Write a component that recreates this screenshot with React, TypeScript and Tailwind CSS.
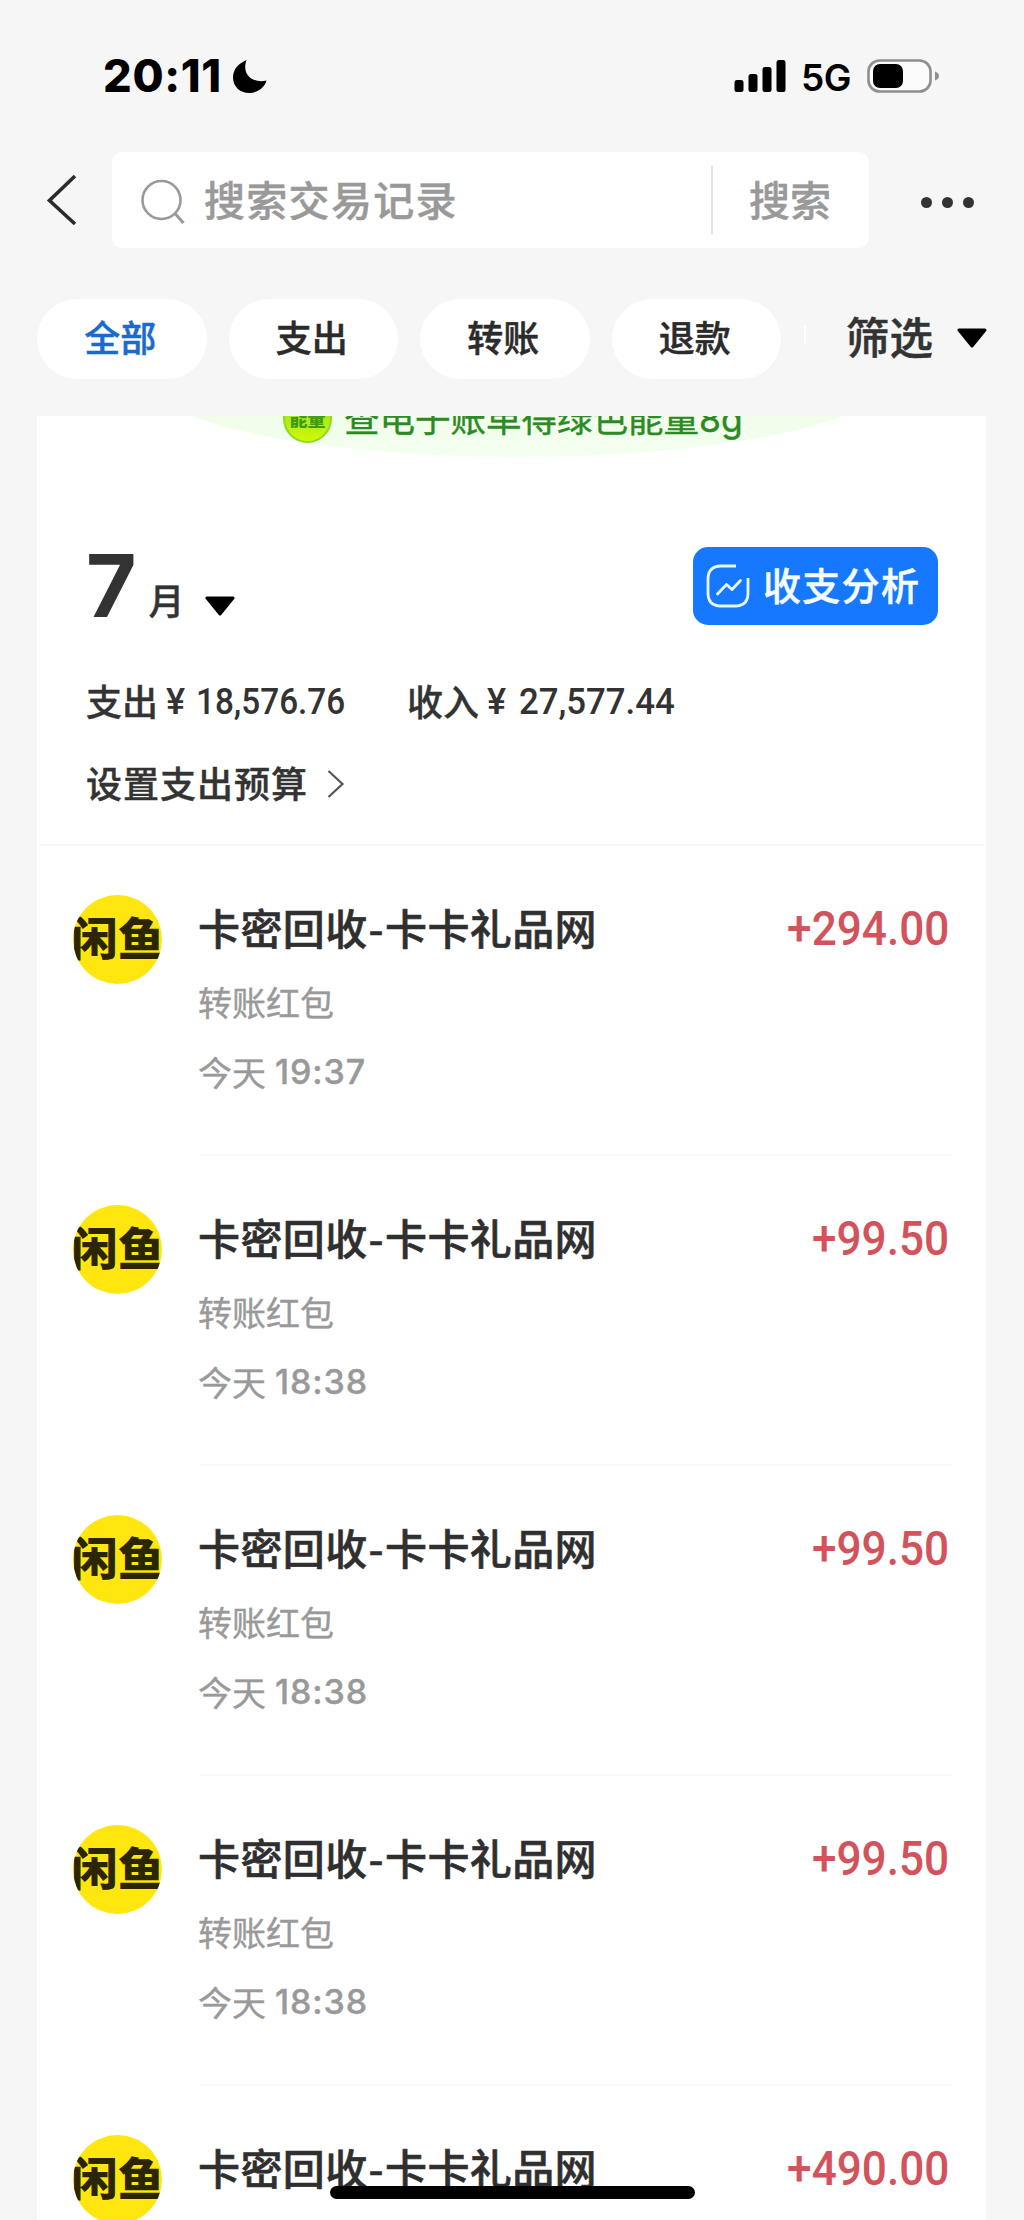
import clsx from "clsx";

type Transaction = {
  id: number;
  title: string[];
  kind: string;
  time: string;
  amount: string;
};

const transactions: Transaction[] = [
  { id: 1, title: ["卡密回收", "卡卡礼品网"], kind: "转账红包", time: "19:37", amount: "+294.00" },
  { id: 2, title: ["卡密回收", "卡卡礼品网"], kind: "转账红包", time: "18:38", amount: "+99.50" },
  { id: 3, title: ["卡密回收", "卡卡礼品网"], kind: "转账红包", time: "18:38", amount: "+99.50" },
  { id: 4, title: ["卡密回收", "卡卡礼品网"], kind: "转账红包", time: "18:38", amount: "+99.50" },
  { id: 5, title: ["卡密回收", "卡卡礼品网"], kind: "转账红包", time: "18:38", amount: "+490.00" },
];

const filters = ["全部", "支出", "转账", "退款"];

// small rounded triangle used next to dropdown labels
const Caret = ({ className }: { className?: string }) => (
  <svg className={clsx("h-5 w-[30px] shrink-0", className)} viewBox="0 0 30 20">
    <path d="M2 2h26L15 18z" fill="#000" stroke="#000" strokeWidth="3" strokeLinejoin="round" />
  </svg>
);

const StatusBar = () => (
  <div className="flex h-[152px] items-start pl-[103px] pr-[84px] pt-[54px]">
    <span className="w-[119px] whitespace-nowrap font-['Inter'] text-[45px] leading-[44px] font-extrabold tracking-[0.700px] text-black">
      20:11
    </span>
    <svg className="mt-[5px] ml-[10px] h-[35px] w-[36px]" viewBox="0 0 36 35">
      <path d="M14.500 1C8 4 1 9 1 18.500C1 27.500 8 34 17 34C26 34 33 28 34.500 21.500C22 24.500 9 17 14.500 1Z" fill="#000" />
    </svg>
    <svg className="mt-[5px] ml-auto h-[34px] w-[52px]" viewBox="0 0 52 34">
      <rect x="0.5" y="21" width="9" height="12" rx="2.500" />
      <rect x="14.500" y="15" width="9" height="18" rx="2.500" />
      <rect x="28.500" y="8" width="9" height="25" rx="2.500" />
      <rect x="42.500" y="1" width="9" height="32" rx="2.500" />
    </svg>
    <span className="mt-[5px] ml-[15px] w-[50px] whitespace-nowrap font-['Inter'] text-[37px] leading-[37px] font-semibold tracking-[-0.5px] text-black">
      5G
    </span>
    <svg className="mt-[5px] ml-4 h-[34px] w-[73px]" viewBox="0 0 73 34">
      <rect x="1.500" y="1.500" width="62" height="31" rx="11" fill="#fbfbfb" stroke="#8e8e8e" strokeWidth="2.600" />
      <rect x="6" y="5" width="30" height="24" rx="7" fill="#000" />
      <path d="M68 12.500c3 1 4 3 4 4.500s-1 3.500-4 4.500z" fill="#8e8e8e" />
    </svg>
  </div>
);

const SearchHeader = () => (
  <div className="flex h-24 items-center pl-[46px]">
    <svg className="h-[52px] w-8" viewBox="0 0 32 52" fill="none">
      <path d="M29 2L3.500 26.500L29 50" stroke="#2b2b2b" strokeWidth="3.600" />
    </svg>
    <div className="ml-[34px] flex h-24 w-[757px] items-center rounded-[10px] bg-white">
      <svg className="mt-1 ml-[29px] h-[46px] w-[46px]" viewBox="0 0 46 46" fill="none">
        <circle cx="20.500" cy="21" r="19" stroke="#999" strokeWidth="2.600" />
        <path d="M34 34.500L42.500 44" stroke="#999" strokeWidth="3" />
      </svg>
      <span className="-mt-1 ml-[17px] text-[41px] leading-[60px] font-medium tracking-[1.300px] text-[#999] [-webkit-text-stroke:0.4px]">
        搜索交易记录
      </span>
      <span className="ml-auto h-[68px] w-0.5 bg-[#e6e2e4]" />
      <span className="-mt-1 mr-[38px] ml-9 text-[41px] leading-[60px] font-medium text-[#999] [-webkit-text-stroke:0.4px]">
        搜索
      </span>
    </div>
    <div className="mt-[5px] ml-[52px] flex gap-[10px]">
      <i className="size-[11px] rounded-full bg-[#333]" />
      <i className="size-[11px] rounded-full bg-[#333]" />
      <i className="size-[11px] rounded-full bg-[#333]" />
    </div>
  </div>
);

const FilterBar = () => (
  <div className="mt-[51px] flex h-20 items-center pl-[37px]">
    <div className="flex gap-[22px]">
      {filters.map((name, i) => (
        <button
          key={name}
          className={clsx(
            "h-20 w-[169.500px] rounded-full bg-white pr-[3px] pb-[5px] text-center text-[36px] leading-[75px] font-medium [-webkit-text-stroke:0.5px]",
            i === 0 ? "text-[#1b6bce]" : "text-[#2b2b2b]"
          )}
        >
          {name}
        </button>
      ))}
    </div>
    <span className="mt-[-8px] ml-[23px] h-[18px] w-0.5 bg-white" />
    <span className="-mt-1.5 ml-[40px] text-[43.500px] leading-[76px] font-medium text-[#333] [-webkit-text-stroke:0.5px]">
      筛选
    </span>
    <Caret className="-mt-0.5 ml-[24px]" />
  </div>
);

// lower part of the green energy banner, the rest is scrolled under the filters
const EnergyBanner = () => (
  <div className="relative h-[44px] overflow-hidden">
    <div className="absolute top-[-110px] left-[115px] h-[151px] w-[730px] rounded-[50%] bg-linear-to-b from-[#e9fbd9] to-[#f3fff0]" />
    <div className="relative flex -translate-y-6 items-center pl-[246px]">
      <span className="flex size-[49px] items-center justify-center rounded-full border-2 border-[#8ddc1c] bg-linear-to-b from-[#7fdc20] to-[#d2f805] text-[18px] leading-none font-black text-[#3f9a12]">
        能量
      </span>
      <span className="mt-px ml-3 whitespace-nowrap text-[35.500px] leading-[48px] text-[#2b8a24] [-webkit-text-stroke:0.4px]">
        查电子账单得绿色能量<span className="font-['Inter']">8g</span>
      </span>
    </div>
  </div>
);

const Money = ({ label, value, wide }: { label: string; value: string; wide?: boolean }) => (
  <div className="flex h-10 items-center whitespace-nowrap">
    <span className="-mt-1 text-[36px] leading-10 font-medium [-webkit-text-stroke:0.4px]">{label}</span>
    <span className="ml-2 w-[31px] font-['Roboto'] text-[36px] leading-10 font-medium">¥</span>
    <span
      className={clsx(
        "origin-left font-['Roboto'] text-[37px] leading-10 font-medium",
        wide ? "ml-px scale-x-[0.94]" : "-ml-px scale-x-[0.9]"
      )}
    >
      {value}
    </span>
  </div>
);

const Summary = () => (
  <div className="relative h-[386px] pl-[49px] text-[#333]">
    <div className="flex h-[165px] items-end">
      <span className="mb-[-4px] font-['Inter'] text-[87px] leading-[87px] font-bold">7</span>
      <span className="mb-[1px] ml-[12px] text-[36px] leading-[50px] font-medium [-webkit-text-stroke:0.4px]">月</span>
      <Caret className="mb-[9px] ml-[20px]" />
      <button className="mr-12 ml-auto flex h-[78px] w-[245px] items-center rounded-[15px] bg-[#1677ff] pl-[13px]">
        <svg className="h-[44px] w-[44px]" viewBox="0 0 44 44" fill="none" stroke="#e9f8ff" strokeWidth="2.800">
          <path d="M30 2H15C6 2 2 7 2 15V29C2 38 7 42 15 42H29C38 42 42 37 42 29V14" />
          <path d="M11.500 30L20.500 20.500L26 25.500L34.500 16.500" strokeLinecap="round" strokeLinejoin="round" />
        </svg>
        <span className="-mt-1 ml-[13px] text-[38px] leading-[56px] font-medium tracking-[1.300px] whitespace-nowrap text-[#f4fcff] [-webkit-text-stroke:0.5px]">
          收支分析
        </span>
      </button>
    </div>
    <div className="mt-[57px] flex">
      <div className="w-[321px]">
        <Money label="支出" value="18,576.76" />
      </div>
      <Money label="收入" value="27,577.44" wide />
    </div>
    <div className="mt-[42px] flex h-10 items-center">
      <span className="-mt-1 text-[36px] leading-10 font-medium tracking-[1px] [-webkit-text-stroke:0.4px]">设置支出预算</span>
      <svg className="ml-[19px] h-[30px] w-[18px]" viewBox="0 0 18 30" fill="none">
        <path d="M1.500 2L15.500 15L1.500 28" stroke="#555" strokeWidth="2.200" />
      </svg>
    </div>
    <div className="absolute right-0.5 bottom-0 left-[3px] h-0.5 bg-[#f5f5f5]" />
  </div>
);

const Avatar = () => (
  <div className="mt-[49px] flex size-[89px] shrink-0 items-center justify-center overflow-hidden rounded-full bg-[#ffe60f]">
    <span className="-mt-1.5 scale-x-[1.04] text-[45px] leading-[60px] font-black whitespace-nowrap text-[#2b2500]">
      闲鱼
    </span>
  </div>
);

const TransactionRow = ({ item, last }: { item: Transaction; last: boolean }) => (
  <li className="flex h-[310px] pl-9">
    <Avatar />
    <div className={clsx("mr-[34px] ml-[37px] flex flex-1 flex-col", !last && "border-b-2 border-[#f9f9f9]")}>
      <div className="mt-[52px] flex h-[60px] items-center justify-between">
        <span className="-mt-[3px] ml-[-1px] text-[42px] leading-[60px] font-medium tracking-[0.400px] whitespace-nowrap text-[#2f2f2f] [-webkit-text-stroke:0.6px]">
          {item.title[0]}
          <span className="mx-px">-</span>
          {item.title[1]}
        </span>
        <span className="mt-0.5 mr-[3px] origin-right scale-x-[0.92] font-['Roboto'] text-[48px] leading-[60px] font-medium text-[#d2535b]">
          {item.amount}
        </span>
      </div>
      <p className="mt-[19px] ml-[-1px] text-[34px] leading-[50px] text-[#999] [-webkit-text-stroke:0.4px]">{item.kind}</p>
      <p className="mt-5 ml-[-1px] flex text-[34px] leading-[50px] text-[#999] [-webkit-text-stroke:0.4px]">
        今天<span className="ml-[9px] font-['Inter'] text-[34px] font-medium tracking-[0.900px]">{item.time}</span>
      </p>
    </div>
  </li>
);

export default function App() {
  return (
    <div className="relative h-[2220px] w-[1024px] overflow-hidden bg-[#f6f6f6] font-['Noto_Sans_CJK_SC',sans-serif]">
      <StatusBar />
      <SearchHeader />
      <FilterBar />
      <main className="mt-[37px] ml-[37px] w-[949px] bg-white">
        <EnergyBanner />
        <Summary />
        <ul>
          {transactions.map((item, i) => (
            <TransactionRow key={item.id} item={item} last={i === transactions.length - 1} />
          ))}
        </ul>
      </main>
      <div className="absolute bottom-[21px] left-[330px] h-[13px] w-[365px] rounded-full bg-black" />
    </div>
  );
}
